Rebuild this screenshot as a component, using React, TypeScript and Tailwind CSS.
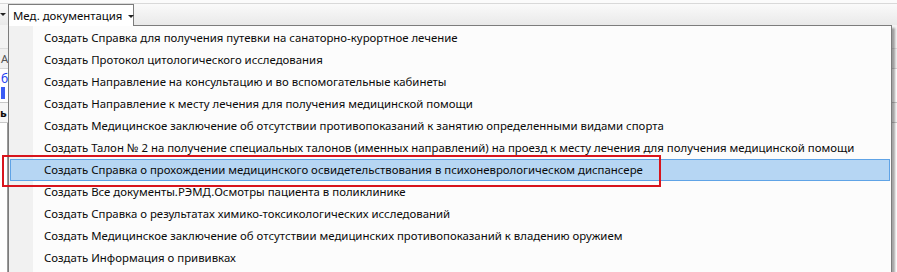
const items = [
  'Создать Справка для получения путевки на санаторно-курортное лечение',
  'Создать Протокол цитологического исследования',
  'Создать Направление на консультацию и во вспомогательные кабинеты',
  'Создать Направление к месту лечения для получения медицинской помощи',
  'Создать Медицинское заключение об отсутствии противопоказаний к занятию определенными видами спорта',
  'Создать Талон № 2 на получение специальных талонов (именных направлений) на проезд к месту лечения для получения медицинской помощи',
  'Создать Справка о прохождении медицинского освидетельствования в психоневрологическом диспансере',
  'Создать Все документы.РЭМД.Осмотры пациента в поликлинике',
  'Создать Справка о результатах химико-токсикологических исследований',
  'Создать Медицинское заключение об отсутствии медицинских противопоказаний к владению оружием',
  'Создать Информация о прививках',
]

const selected = 6

export default function App() {
  return (
    <div
      className="relative h-[272px] w-[897px] overflow-hidden whitespace-nowrap bg-white text-[11.4px] text-[#0a0a0a]"
      style={{ fontFamily: '"Segoe UI", "Noto Sans", sans-serif' }}
    >
      {/* toolbar behind the menu */}
      <div className="h-[3px] bg-[#fbfbfb]" />
      <div className="h-[22px] border-t border-[#d9d9d9] bg-gradient-to-b from-[#fafafa] to-[#e9e9e9]" />
      <div className="h-[24px] border-b border-[#dcdcdc] bg-[#f3f3f3]" />
      <div className="flex h-[20px] items-center border-b border-[#d5d5d5] bg-[#f0f0f0] pl-[1px] text-[#555]">
        А
      </div>
      <div className="flex h-[34px] flex-col justify-center gap-[2px] border-b border-[#c8c8c8] bg-white pl-[1px] text-[12px] leading-[13px] text-[#1a3df0]">
        <span>б</span>
        <span className="h-[12px] w-[4px] bg-[#3a5cf5]" />
      </div>
      <div className="flex h-[20px] items-center border-b border-[#c8c8c8] bg-[#f6f6f6] font-bold">ь</div>
      <div className="ml-[7px] h-[200px] border-l border-[#9a9a9a]" />

      {/* little arrow of the previous menu tab */}
      <div className="absolute left-[0px] top-[13px] h-0 w-0 border-x-[3px] border-t-[3px] border-x-transparent border-t-[#222]" />

      {/* menu tab */}
      <div className="absolute left-[8px] top-[4px] z-20 flex h-[22px] w-[126px] items-center gap-[6px] border border-b-0 border-[#7c7c7c] bg-white pl-[4px]">
        <span>Мед. документация</span>
        <span className="mt-[1px] h-0 w-0 border-x-[3px] border-t-[3px] border-x-transparent border-t-[#222]" />
      </div>

      {/* dropdown */}
      <div className="absolute left-[8px] top-[25px] z-10 flex h-[260px] w-[884px] border border-[#7c7c7c] bg-[#fcfcfc] shadow-[3px_3px_2px_rgba(0,0,0,0.35)]">
        <div className="w-[24px] shrink-0 bg-[#f1f1f1]" />
        <div className="flex-1 pt-[1px]">
          {items.map((item, i) => (
            <div
              key={i}
              className={
                i === selected
                  ? '-ml-[23px] mr-[1px] flex h-[22px] items-center border border-[#5fa3e6] bg-[#b6d6f3] pl-[33px]'
                  : 'flex h-[22px] items-center pl-[11px]'
              }
            >
              {item}
            </div>
          ))}
        </div>
      </div>

      {/* red annotation */}
      <div className="absolute left-[2px] top-[155px] z-30 h-[32px] w-[659px] border-[2px] border-[#d8141c]" />
    </div>
  )
}
